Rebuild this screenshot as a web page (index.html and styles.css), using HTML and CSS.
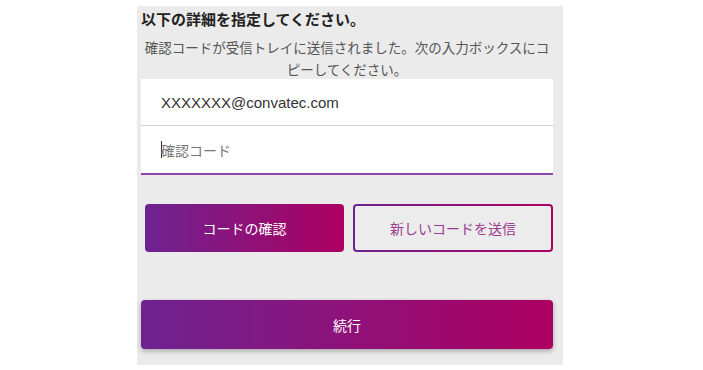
FILE: index.html
```html
<!DOCTYPE html>
<html lang="ja">
<head>
  <meta charset="UTF-8">
  <meta name="viewport" content="width=device-width, initial-scale=1.0">
  <title>確認コード</title>
  <link rel="stylesheet" href="styles.css">
</head>
<body>
  <div class="panel">
    <div class="heading">以下の詳細を指定してください。</div>
    <div class="info">確認コードが受信トレイに送信されました。次の入力ボックスにコピーしてください。</div>
    <div class="field email">XXXXXXX@convatec.com</div>
    <div class="field code"><span class="caret"></span><span class="placeholder">確認コード</span></div>
    <div class="actions">
      <button class="btn btn-fill">コードの確認</button>
      <button class="btn btn-outline"><span>新しいコードを送信</span></button>
    </div>
    <button class="btn btn-continue">続行</button>
  </div>
</body>
</html>
```

FILE: styles.css
```css
body {
  margin: 0;
  background: #fff;
  font-family: "Noto Sans CJK JP", "Noto Sans", sans-serif;
}

.panel {
  width: 412px;
  height: 359px;
  margin: 6px 0 0 137px;
  padding: 0 10px 0 4px;
  background: #ebebeb;
}

.heading {
  font-size: 15px;
  font-weight: bold;
  color: #222;
  line-height: 22px;
  padding-top: 2px;
}

.info {
  font-size: 13.5px;
  color: #555;
  line-height: 22px;
  text-align: center;
  margin: 6px 0 0;
  padding: 0 2px;
}

.field {
  height: 47px;
  background: #fff;
  display: flex;
  align-items: center;
  padding-left: 20px;
  box-sizing: border-box;
}

.email {
  margin-top: -1px;
  font-family: "Liberation Sans", "Noto Sans CJK JP", sans-serif;
  font-size: 15px;
  color: #333;
  border-bottom: 1px solid #d0d0d0;
}

.code {
  height: 49px;
  border-bottom: 2px solid #8e44ad;
  font-size: 14px;
}

.caret {
  width: 1px;
  height: 17px;
  background: #333;
  margin-right: -1px;
}

.placeholder {
  color: #777;
}

.actions {
  display: flex;
  gap: 9px;
  margin: 29px 0 0 4px;
}

.btn {
  font-family: "Noto Sans CJK JP", "Noto Sans", sans-serif;
  font-size: 14px;
  border: none;
  border-radius: 4px;
  cursor: pointer;
}

.btn-fill {
  width: 199px;
  height: 48px;
  color: #fff;
  background: linear-gradient(90deg, #6e2391, #ad0061);
}

.btn-outline {
  width: 200px;
  height: 48px;
  padding: 2px;
  background: linear-gradient(90deg, #6e2391, #ad0061);
}

.btn-outline span {
  display: flex;
  align-items: center;
  justify-content: center;
  height: 100%;
  border-radius: 2px;
  background: #ececec;
  color: #9b3b8f;
}

.btn-continue {
  display: block;
  width: 412px;
  height: 49px;
  margin-top: 48px;
  color: #fff;
  background: linear-gradient(90deg, #6e2391, #ad0061);
  box-shadow: 0 2px 5px rgba(0, 0, 0, 0.3);
}
```
